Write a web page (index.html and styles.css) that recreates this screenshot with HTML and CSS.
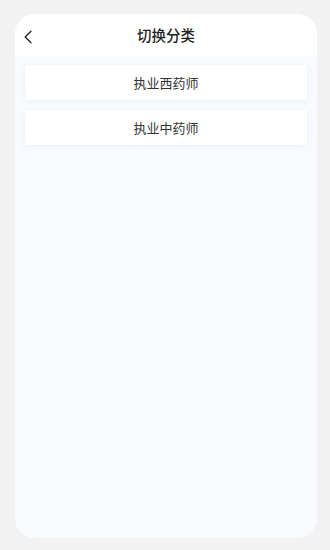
FILE: index.html
```html
<!DOCTYPE html>
<html lang="zh">
<head>
<meta charset="utf-8">
<link rel="stylesheet" href="styles.css">
</head>
<body>
<div class="screen">
  <div class="phone">
    <header class="topbar">
      <svg class="back" width="10" height="14" viewBox="0 0 10 14"><path d="M8 1.2 L2.2 7 L8 12.8" fill="none" stroke="#222" stroke-width="1.3" stroke-linecap="round" stroke-linejoin="round"/></svg>
      <div class="title">切换分类</div>
    </header>
    <main class="list">
      <div class="item">执业西药师</div>
      <div class="item">执业中药师</div>
    </main>
  </div>
</div>
</body>
</html>
```
FILE: styles.css
```css
* { box-sizing: border-box; }
html, body { margin: 0; padding: 0; }
body {
  width: 330px;
  height: 550px;
  background: #f2f2f2;
  font-family: "Noto Sans CJK SC", "Noto Sans", sans-serif;
  overflow: hidden;
}
.screen {
  width: 330px;
  height: 550px;
  padding: 14px 13px 12px 15px;
}
.phone {
  width: 302px;
  height: 524px;
  border-radius: 20px;
  background: #f9fbfe;
  overflow: hidden;
  display: flex;
  flex-direction: column;
}
.topbar {
  height: 42px;
  background: #ffffff;
  display: flex;
  align-items: center;
  justify-content: center;
  position: relative;
  flex-shrink: 0;
}
.back {
  position: absolute;
  left: 8px;
  top: 16px;
}
.title {
  font-size: 14.5px;
  font-weight: 500;
  color: #1f1f1f;
  margin-bottom: 1px;
}
.list {
  padding: 9px 10px 0 10px;
  display: flex;
  flex-direction: column;
  gap: 10px;
}
.item {
  height: 35px;
  background: #ffffff;
  display: flex;
  align-items: center;
  justify-content: center;
  font-size: 13px;
  color: #333;
  box-shadow: 0 1px 6px rgba(205, 220, 245, 0.45);
}
```
